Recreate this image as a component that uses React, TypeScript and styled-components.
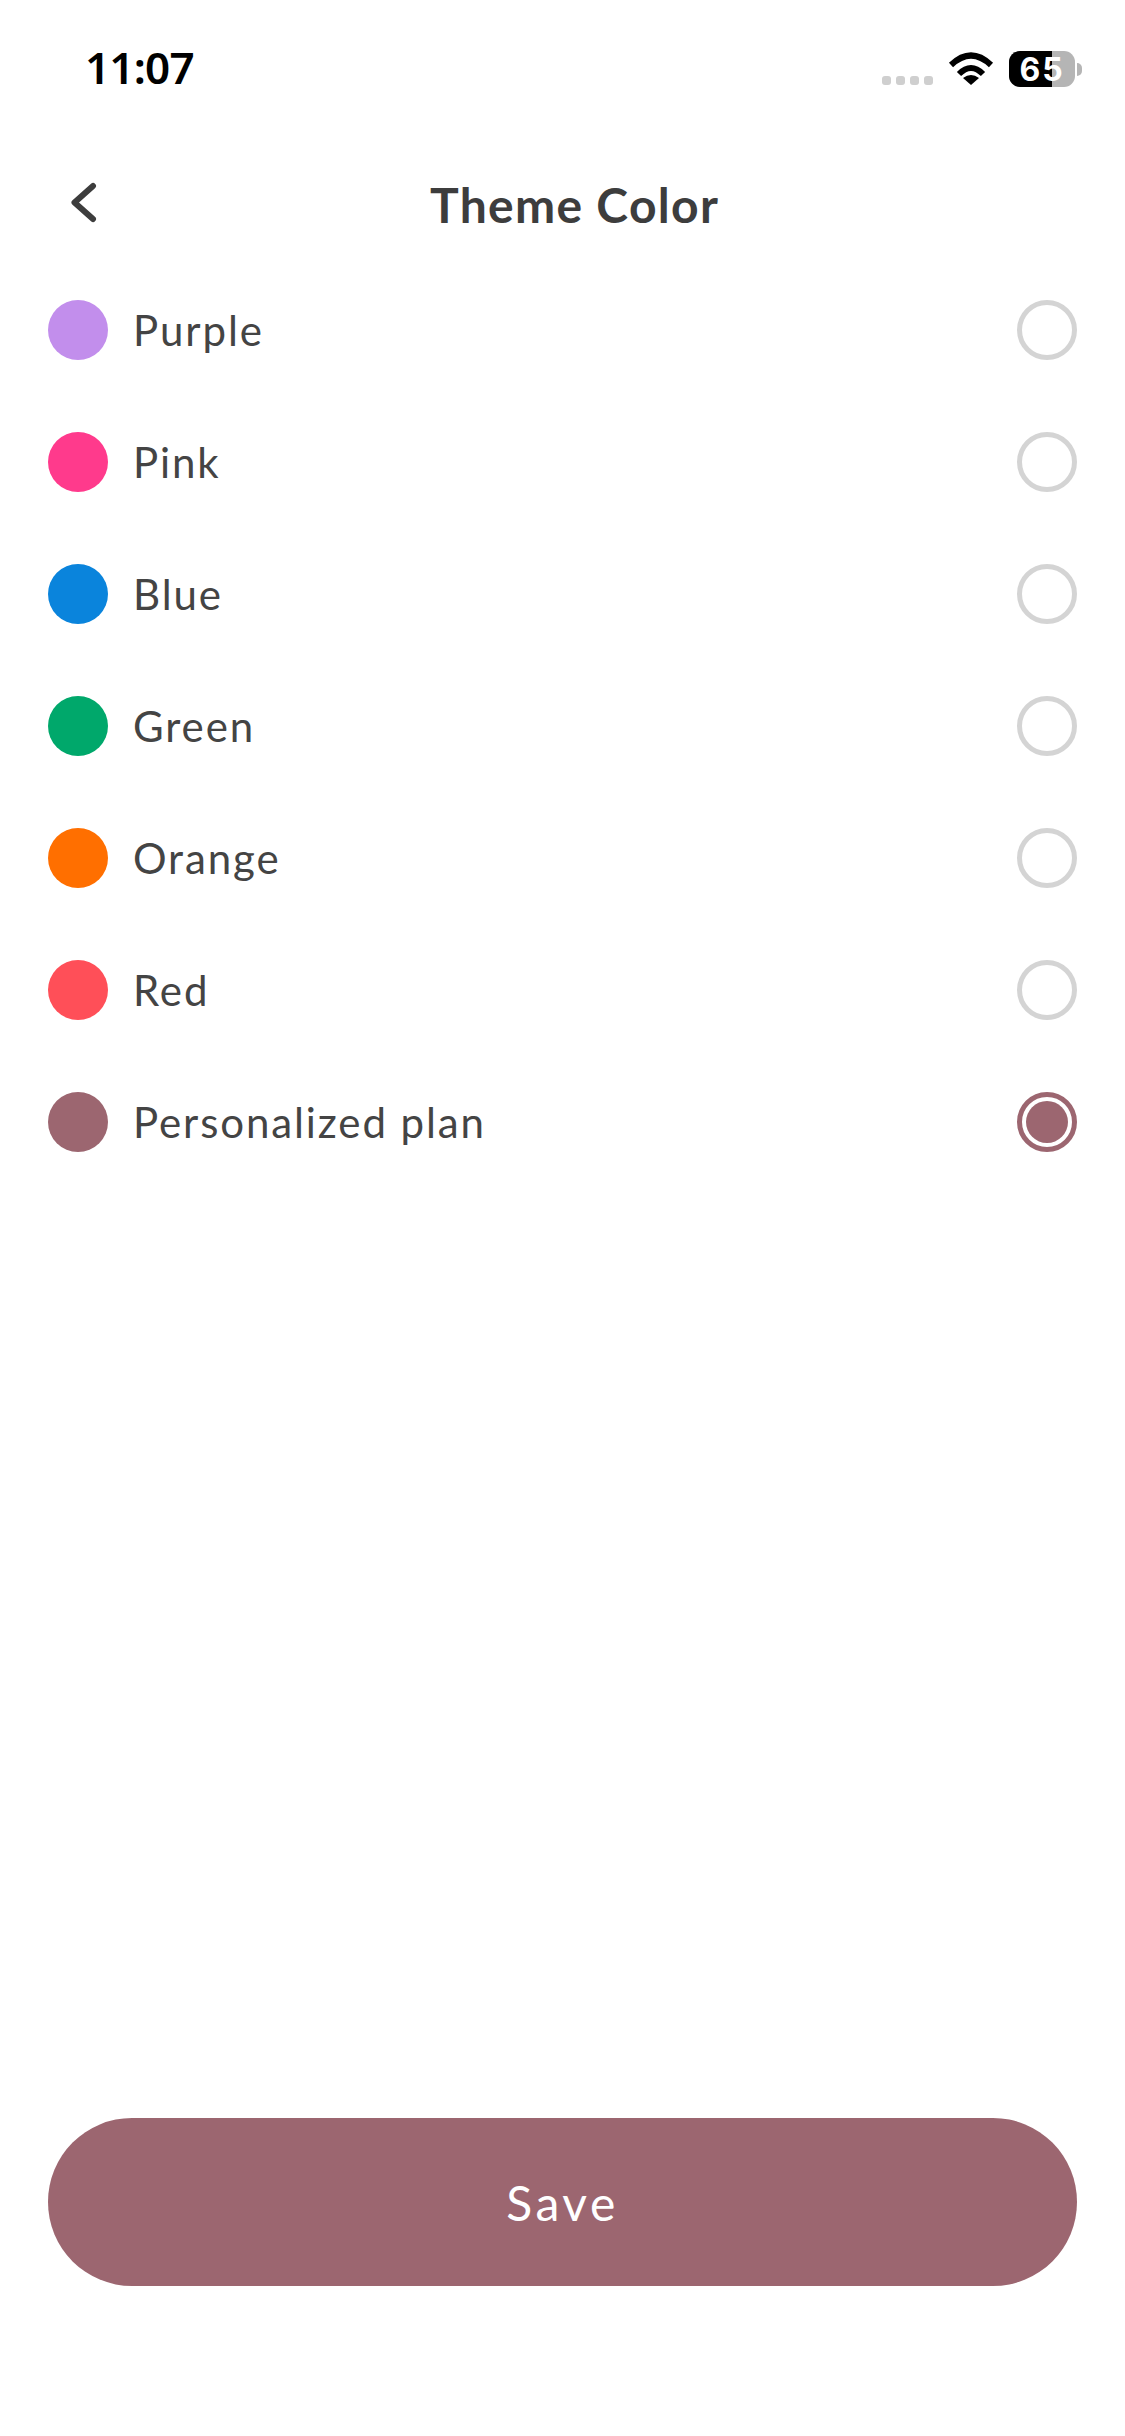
import React, { useState } from "react";
import styled, { createGlobalStyle } from "styled-components";

const MAUVE = "#9c6670";

const themes = [
  { name: "Purple", color: "#c28eec" },
  { name: "Pink", color: "#ff3a8c" },
  { name: "Blue", color: "#0a84dc" },
  { name: "Green", color: "#00a86b" },
  { name: "Orange", color: "#ff6f00" },
  { name: "Red", color: "#ff4f58" },
  { name: "Personalized plan", color: MAUVE },
];

const GlobalStyle = createGlobalStyle`
  html, body {
    margin: 0;
    padding: 0;
    background: #fff;
  }
`;

const Page = styled.div`
  width: 1125px;
  height: 2436px;
  display: flex;
  flex-direction: column;
  padding: 0 48px 150px;
  box-sizing: border-box;
  background: #fff;
  font-family: "Lato", "Noto Sans", sans-serif;
  color: #3d3d3d;
`;

const StatusBar = styled.div`
  height: 138px;
  flex: none;
  display: flex;
  align-items: center;
  justify-content: space-between;
  padding: 0 0 0 37px;
`;

const Time = styled.div`
  padding-bottom: 5px;
  font-family: "Noto Sans", sans-serif;
  font-size: 44px;
  font-weight: 600;
  color: #000;
  letter-spacing: -0.8px;
`;

const StatusIcons = styled.div`
  display: flex;
  align-items: center;
  gap: 15px;
`;

const SignalDots = styled.div`
  display: flex;
  gap: 5px;
  padding-top: 22px;
`;

const SignalDot = styled.span`
  width: 9px;
  height: 9px;
  border-radius: 3px;
  background: #cfcfcf;
`;

const Battery = styled.div`
  position: relative;
  width: 66px;
  height: 36px;
  border-radius: 11px;
  overflow: hidden;
  background: #b5b5b5;
`;

const BatteryFill = styled.div<{ $level: number }>`
  width: ${(p) => p.$level}%;
  height: 100%;
  background: #000;
`;

const BatteryLabel = styled.span`
  position: absolute;
  inset: 0;
  display: flex;
  align-items: center;
  justify-content: center;
  font-family: "Inter", sans-serif;
  font-size: 32px;
  font-weight: 700;
  color: #fff;
  letter-spacing: 2px;
`;

const BatteryNub = styled.div`
  width: 5px;
  height: 13px;
  margin: 0 -5px 0 -13px;
  border-radius: 0 6px 6px 0;
  background: #b5b5b5;
`;

const Header = styled.div`
  height: 126px;
  flex: none;
  display: flex;
  align-items: center;
  padding-left: 23px;
`;

const BackButton = styled.button`
  width: 33px;
  height: 48px;
  margin-top: 4px;
  padding: 0;
  border: 0;
  background: none;
  display: flex;
  align-items: center;
`;

const Title = styled.h1`
  margin: 6px 0 0 326px;
  font-size: 48px;
  font-weight: 700;
  letter-spacing: 1.3px;
  color: #3d3d3d;
`;

const List = styled.div`
  display: flex;
  flex-direction: column;
`;

const Row = styled.label`
  height: 132px;
  display: flex;
  align-items: center;
  cursor: pointer;
`;

const Swatch = styled.span<{ $color: string }>`
  width: 60px;
  height: 60px;
  flex: none;
  border-radius: 50%;
  background: ${(p) => p.$color};
`;

const Name = styled.span`
  margin-left: 25px;
  flex: 1;
  font-size: 42px;
  letter-spacing: 1.9px;
  color: #444;
`;

const Radio = styled.span<{ $selected: boolean }>`
  width: 60px;
  height: 60px;
  flex: none;
  box-sizing: border-box;
  border-radius: 50%;
  border: ${(p) => (p.$selected ? `5px solid ${MAUVE}` : "5px solid #d4d4d4")};
  padding: 4px;
  display: flex;
  background: ${(p) => (p.$selected ? MAUVE : "#fff")};
  background-clip: content-box;
`;

const SaveButton = styled.button`
  margin-top: auto;
  height: 168px;
  flex: none;
  border: 0;
  border-radius: 84px;
  background: ${MAUVE};
  color: #fff;
  font-family: inherit;
  font-size: 48px;
  letter-spacing: 3.5px;
`;

export default function App() {
  const [selected, setSelected] = useState("Personalized plan");

  return (
    <Page>
      <GlobalStyle />
      <StatusBar>
        <Time>11:07</Time>
        <StatusIcons>
          <SignalDots>
            <SignalDot />
            <SignalDot />
            <SignalDot />
            <SignalDot />
          </SignalDots>
          <svg width="46" height="34" viewBox="0 0 46 34">
            <path d="M3 13Q23 -6 43 13" fill="none" stroke="#000" strokeWidth="6" />
            <path d="M11 22Q23 10 35 22" fill="none" stroke="#000" strokeWidth="6" />
            <path d="M23 33L15 26Q23 20 31 26Z" fill="#000" />
          </svg>
          <Battery>
            <BatteryFill $level={65} />
            <BatteryLabel>65</BatteryLabel>
          </Battery>
          <BatteryNub />
        </StatusIcons>
      </StatusBar>
      <Header>
        <BackButton aria-label="Back">
          <svg width="28" height="44" viewBox="0 0 28 44">
            <path
              d="M22 5L3.5 21.5L22 38"
              fill="none"
              stroke="#3d3d3d"
              strokeWidth="6"
              strokeLinecap="round"
              strokeLinejoin="round"
            />
          </svg>
        </BackButton>
        <Title>Theme Color</Title>
      </Header>
      <List>
        {themes.map((t) => (
          <Row key={t.name} onClick={() => setSelected(t.name)}>
            <Swatch $color={t.color} />
            <Name>{t.name}</Name>
            <Radio $selected={selected === t.name} />
          </Row>
        ))}
      </List>
      <SaveButton>Save</SaveButton>
    </Page>
  );
}
